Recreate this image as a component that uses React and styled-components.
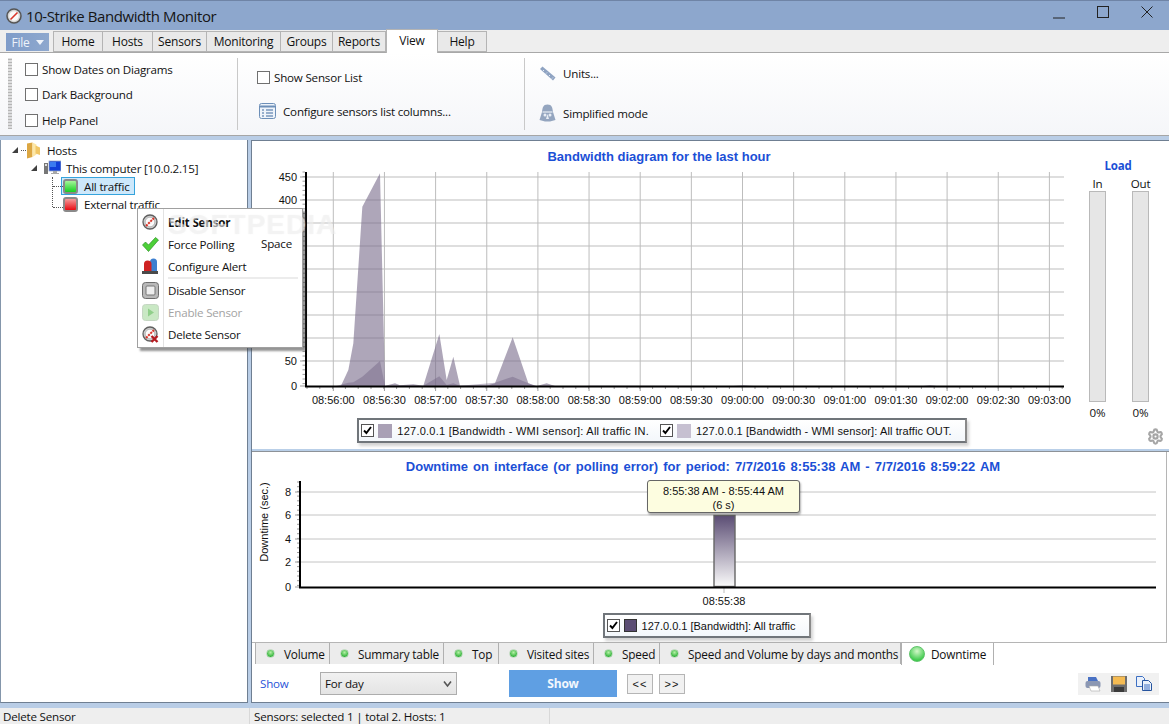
import React from 'react';
import styled, { createGlobalStyle } from 'styled-components';
import { Settings } from 'lucide-react';

const GlobalStyle = createGlobalStyle`
    html, body {
        margin: 0;
        padding: 0;
        background: #fff;
        overflow: hidden;
    }
    * {
        box-sizing: border-box;
    }
`;

const UI_FONT = '"Open Sans", "Noto Sans", sans-serif';
const CHART_FONT = '"Liberation Sans", Arial, sans-serif';

const Window = styled.div`
    width: 1169px;
    height: 724px;
    display: flex;
    flex-direction: column;
    position: relative;
    overflow: hidden;
    background: #b9cde6;
    font-family: ${UI_FONT};
    font-size: 11.6px;
    letter-spacing: -0.2px;
    color: #111;
`;

/* ---------- title bar ---------- */
const TitleBar = styled.div`
    height: 30px;
    flex: none;
    display: flex;
    align-items: center;
    padding-left: 6px;
    background: #8da7cd;
    border-top: 1px solid #6f84a6;
`;

const AppTitle = styled.div`
    font-size: 15px;
    letter-spacing: -0.4px;
    margin-left: 4px;
    color: #151515;
`;

const WindowButtons = styled.div`
    margin-left: auto;
    display: flex;
    align-items: flex-start;
    height: 100%;
`;

const WinBtn = styled.div`
    width: 44px;
    height: 24px;
    display: flex;
    justify-content: center;
    align-items: center;
`;

/* ---------- menu tabs ---------- */
const TabStrip = styled.div`
    height: 23px;
    flex: none;
    display: flex;
    align-items: flex-end;
    padding-left: 6px;
    background: #eeeeee;
    border-bottom: 1px solid #a8a8a8;
    position: relative;
`;

const FileButton = styled.div`
    width: 43px;
    height: 18px;
    margin: 3px 4px 1px 0;
    align-self: flex-start;
    display: flex;
    align-items: center;
    justify-content: center;
    gap: 6px;
    color: #eef3fa;
    font-size: 12px;
    background: linear-gradient(90deg, #7f9cc9, #8ea8ce);
`;

const MenuTab = styled.div`
    width: ${(props) => props.$w}px;
    height: ${(props) => (props.$active ? 24 : 21)}px;
    margin-bottom: ${(props) => (props.$active ? -1 : 0)}px;
    display: flex;
    align-items: center;
    justify-content: center;
    padding-bottom: ${(props) => (props.$active ? 3 : 0)}px;
    background: ${(props) => (props.$active ? '#fff' : '#e9e9e9')};
    border: 1px solid #b4b4b4;
    border-bottom: ${(props) => (props.$active ? 'none' : '1px solid #b4b4b4')};
    border-left-width: ${(props) => (props.$first || props.$active ? 1 : 0)}px;
    font-size: 12px;
`;

/* ---------- ribbon ---------- */
const Ribbon = styled.div`
    height: 83px;
    flex: none;
    display: flex;
    padding: 5px 0 5px 8px;
    background: linear-gradient(180deg, #ffffff, #f5f6f9);
    border-bottom: 1px solid #a6a6a6;
`;

const Grip = styled.div`
    width: 4px;
    height: 71px;
    background-image: radial-gradient(circle, #b5b5b5 1px, transparent 1.2px);
    background-size: 2px 3px;
`;

const RibbonGroup = styled.div`
    width: ${(props) => props.$w}px;
    display: flex;
    flex-direction: column;
    justify-content: ${(props) => props.$justify || 'space-between'};
    gap: ${(props) => props.$gap || 0}px;
    padding: ${(props) => props.$pad};
    border-right: ${(props) => (props.$last ? 'none' : '1px solid #c9c9c9')};
`;

const CheckRow = styled.label`
    display: flex;
    align-items: center;
    gap: 4px;
    height: 16px;
`;

const CheckBox = styled.span`
    width: 13px;
    height: 13px;
    flex: none;
    background: #fff;
    border: 1px solid #707070;
    display: inline-flex;
    align-items: center;
    justify-content: center;
`;

const RibbonAction = styled.div`
    display: flex;
    align-items: center;
    gap: ${(props) => props.$gap}px;
    height: 18px;
    margin-left: ${(props) => props.$left || 0}px;
`;

/* ---------- main body ---------- */
const Body = styled.div`
    flex: 1;
    display: flex;
    min-height: 0;
    padding-top: 4px;
`;

const TreePane = styled.div`
    width: 248px;
    flex: none;
    background: #fff;
    border: 1px solid #6f7f92;
    border-top: none;
    border-left-color: #8496ab;
    padding-top: 1px;
`;

const TreeRow = styled.div`
    height: 18px;
    display: flex;
    align-items: center;
    padding-left: ${(props) => props.$indent}px;
    position: relative;
`;

const Expander = styled.span`
    width: 0;
    height: 0;
    border-left: 6px solid transparent;
    border-bottom: 6px solid #404040;
    margin-right: ${(props) => props.$gap}px;
    flex: none;
`;

const DotLink = styled.span`
    position: absolute;
    left: ${(props) => props.$x}px;
    top: ${(props) => props.$y}px;
    width: ${(props) => props.$w || 0}px;
    height: ${(props) => props.$h || 0}px;
    border-top: ${(props) => (props.$w ? '1px dotted #555' : 'none')};
    border-left: ${(props) => (props.$h ? '1px dotted #555' : 'none')};
`;

const TreeLabel = styled.span`
    margin-left: ${(props) => props.$gap}px;
    white-space: nowrap;
`;

const SensorBox = styled.div`
    height: 18px;
    width: ${(props) => (props.$selected ? '74px' : 'auto')};
    display: flex;
    align-items: center;
    padding-left: 2px;
    background: ${(props) => (props.$selected ? '#cde8fb' : 'transparent')};
    outline: ${(props) => (props.$selected ? '1px solid #35a3dc' : 'none')};
    outline-offset: -1px;
`;

const SensorLed = styled.span`
    width: 15px;
    height: 15px;
    flex: none;
    border-radius: 3px;
    border: 2px solid #8a8a8a;
    background: ${(props) =>
        props.$color === 'green'
            ? 'linear-gradient(180deg, #a5f59b, #15d020)'
            : 'linear-gradient(180deg, #f59a9a, #e80b12)'};
`;

const Main = styled.div`
    flex: 1;
    display: flex;
    flex-direction: column;
    min-width: 0;
    margin-left: 3px;
    background: #fff;
    border-left: 1px solid #6f7f92;
    border-top: 1px solid #6f7f92;
    border-bottom: 1px solid #6f7f92;
`;

const TopChart = styled.section`
    height: 308px;
    flex: none;
    display: flex;
    background: #fff;
`;

const ChartColumn = styled.div`
    width: 814px;
    flex: none;
    display: flex;
    flex-direction: column;
    align-items: center;
`;

const ChartTitle = styled.h2`
    margin: 0;
    font-family: ${CHART_FONT};
    font-size: 13px;
    font-weight: 700;
    letter-spacing: 0;
    color: #1b4fd6;
    white-space: nowrap;
    word-spacing: ${(props) => props.$spacing || 0}px;
    height: ${(props) => props.$h}px;
    line-height: ${(props) => props.$h}px;
    padding-right: ${(props) => props.$shift || 0}px;
`;

const Plot = styled.svg`
    display: block;
    flex: none;
    overflow: visible;
    font-family: ${CHART_FONT};
    font-size: 11px;
    letter-spacing: 0;
`;

const Legend = styled.div`
    height: 25px;
    flex: none;
    margin-right: ${(props) => props.$shift || 0}px;
    display: flex;
    align-items: center;
    gap: 11px;
    padding: 0 ${(props) => props.$endPad}px 0 2px;
    font-family: ${CHART_FONT};
    font-size: 11px;
    background: linear-gradient(180deg, #fff, #f3f7fb);
    border: 2px solid #70757a;
    border-right-color: #8a8a8a;
    box-shadow: 2px 3px 3px rgba(0, 0, 0, 0.18);
`;

const LegendItem = styled.span`
    display: flex;
    align-items: center;
    white-space: nowrap;
    letter-spacing: ${(props) => props.$tracking}px;
`;

const LegendCheck = styled(CheckBox)`
    margin-right: 4px;
    border-color: #555;
`;

const Swatch = styled.span`
    width: ${(props) => props.$size || 14}px;
    height: ${(props) => props.$size || 14}px;
    margin-right: 5px;
    background: ${(props) => props.$color};
    border: ${(props) => (props.$outlined ? '1px solid #333' : 'none')};
`;

const LoadColumn = styled.div`
    flex: 1;
    position: relative;
    padding-top: 18px;
`;

const LoadTitle = styled.div`
    width: 60px;
    margin-left: 22px;
    text-align: center;
    font-weight: 700;
    font-size: 11.5px;
    color: #1b4fd6;
    line-height: 14px;
`;

const Meters = styled.div`
    display: flex;
    gap: 26px;
    margin-left: 23px;
    margin-top: 3px;
`;

const Meter = styled.div`
    width: 17px;
    display: flex;
    flex-direction: column;
    align-items: center;
    line-height: 15px;
    white-space: nowrap;
`;

const MeterBar = styled.div`
    width: 17px;
    height: 211px;
    margin: 0 0 3px;
    background: #e6e6e6;
    border: 1px solid #b9b9b9;
`;

const GearSpot = styled.div`
    position: absolute;
    left: 81px;
    top: 287px;
    color: #a6a6a6;
`;

const Divider = styled.div`
    height: 3px;
    flex: none;
    background: #b9cfe8;
    border-bottom: 1px solid #8d9298;
`;

const BottomChart = styled.section`
    height: 191px;
    flex: none;
    display: flex;
    flex-direction: column;
    align-items: center;
    margin-right: 2px;
    background: #fff;
    border-right: 1px solid #b5b5b5;
    border-bottom: 1px solid #b5b5b5;
`;

const ViewTabs = styled.div`
    height: 22px;
    flex: none;
    display: flex;
    padding-left: 3px;
    background: #fff;
`;

const ViewTab = styled.div`
    width: ${(props) => props.$w}px;
    height: ${(props) => (props.$active ? 22 : 21)}px;
    display: flex;
    align-items: center;
    padding-left: ${(props) => (props.$active ? 7 : 10)}px;
    gap: ${(props) => (props.$active ? 6 : 9)}px;
    background: ${(props) => (props.$active ? '#fff' : '#ececec')};
    border-left: ${(props) => (props.$active ? '1px solid #b0b0b0' : 'none')};
    border-right: 1px solid #b0b0b0;
    white-space: nowrap;
    font-size: 11.8px;
    &:first-child {
        border-left: 1px solid #b0b0b0;
    }
`;

const Led = styled.span`
    width: 9px;
    height: 9px;
    flex: none;
    border-radius: 50%;
    background: radial-gradient(circle at 50% 35%, #b4f0a5, #35b53d 70%);
    border: 1px solid #bcd9bc;
`;

const BigLed = styled(Led)`
    width: 16px;
    height: 16px;
    background: radial-gradient(circle at 50% 30%, #d2f8c8, #3fca4d 75%);
    border-color: #5fc46a;
`;

const Controls = styled.div`
    flex: 1;
    display: flex;
    align-items: center;
    padding: 0 10px 0 8px;
    background: #fff;
`;

const ShowLabel = styled.span`
    width: 60px;
    color: #2a55d8;
`;

const Combo = styled.div`
    width: 137px;
    height: 23px;
    display: flex;
    align-items: center;
    justify-content: space-between;
    padding: 0 4px;
    background: linear-gradient(180deg, #f1f1f1, #e4e4e4);
    border: 1px solid #adadad;
`;

const ShowButton = styled.div`
    width: 108px;
    height: 27px;
    margin-left: 52px;
    display: flex;
    align-items: center;
    justify-content: center;
    background: #5f9fe3;
    color: #f2f7fd;
    font-weight: 700;
    font-size: 12px;
`;

const StepButton = styled.div`
    width: 26px;
    height: 20px;
    margin-left: ${(props) => props.$left}px;
    display: flex;
    align-items: center;
    justify-content: center;
    background: #f1f1f1;
    border: 1px solid #b5b5b5;
    font-family: ${CHART_FONT};
    font-size: 11px;
    letter-spacing: 1px;
`;

const ExportGroup = styled.div`
    margin-left: auto;
    width: 81px;
    height: 22px;
    display: flex;
    align-items: center;
    justify-content: space-around;
    padding: 0 3px;
    background: #f1f1f1;
`;

const StatusBar = styled.div`
    height: 16px;
    flex: none;
    margin-top: 5px;
    display: flex;
    align-items: center;
    background: #eeeeee;
`;

const StatusCell = styled.div`
    width: ${(props) => props.$w}px;
    height: 100%;
    padding-left: ${(props) => props.$pad}px;
    border-right: 1px solid #d8d8d8;
    line-height: 17px;
    white-space: nowrap;
`;

/* ---------- context menu ---------- */
const ContextMenu = styled.div`
    position: absolute;
    left: 137px;
    top: 208px;
    width: 166px;
    height: 140px;
    background: #fff;
    border: 1px solid #a0a0a0;
    box-shadow: 3px 3px 2px rgba(60, 60, 60, 0.55);
    padding-top: 2px;
    z-index: 3;
    &::before {
        content: '';
        position: absolute;
        left: 25px;
        top: 0;
        bottom: 0;
        border-left: 1px solid #e2e2e2;
    }
`;

const MenuItem = styled.div`
    height: 22px;
    display: flex;
    align-items: center;
    position: relative;
    padding-left: 30px;
    font-weight: ${(props) => (props.$bold ? 700 : 400)};
    color: ${(props) => (props.$disabled ? '#a3a3a3' : '#111')};
    white-space: nowrap;
`;

const MenuIcon = styled.span`
    position: absolute;
    left: 4px;
    top: 3px;
    width: 17px;
    height: 17px;
    display: flex;
`;

const Shortcut = styled.span`
    position: absolute;
    left: 123px;
    top: 3px;
`;

const MenuSeparator = styled.div`
    height: 2px;
    margin-left: 30px;
    margin-right: 4px;
    background: #ececec;
`;

const Watermark = styled.div`
    position: absolute;
    left: 168px;
    top: 209px;
    z-index: 4;
    pointer-events: none;
    font-family: ${CHART_FONT};
    font-weight: 700;
    font-size: 28px;
    letter-spacing: 1px;
    color: rgba(246, 246, 246, 0.45);
    text-shadow: 0 0 1px rgba(215, 215, 215, 0.35);
`;

/* ---------- tooltips on the chart ---------- */
const Tooltip = styled.div`
    position: absolute;
    left: 647px;
    top: 480px;
    width: 153px;
    height: 33px;
    z-index: 2;
    text-align: center;
    font-family: ${CHART_FONT};
    font-size: 11px;
    letter-spacing: 0;
    line-height: 14px;
    padding-top: 3px;
    background: #fdfde0;
    border: 1px solid #666;
    border-radius: 3px;
    box-shadow: 1px 2px 2px rgba(0, 0, 0, 0.3);
`;

/* ---------- icons ---------- */
const Check = () => (
    <svg width="11" height="11" viewBox="0 0 11 11">
        <path d="M2 5.5 L4.4 8 L9 2" fill="none" stroke="#000" strokeWidth="1.9" />
    </svg>
);

const Gauge = ({ cross }) => (
    <svg width="17" height="17" viewBox="0 0 17 17">
        <circle cx="8" cy="8" r="7" fill="#cfcfcf" stroke="#5f5f5f" strokeWidth="1.3" />
        <circle cx="8" cy="8" r="4.8" fill="#fbfbfb" stroke="#9a9a9a" strokeWidth="0.6" />
        <path d="M4 12 L12 4" stroke="#d9362b" strokeWidth="2" strokeDasharray="2.2 0.9" />
        {cross && <path d="M9.5 10 L15.5 16 M15.5 10 L9.5 16" stroke="#b51c22" strokeWidth="2.4" />}
    </svg>
);

const Folder = () => (
    <svg width="13" height="17" viewBox="0 0 13 17">
        <path d="M0 1.5 L5.5 0.5 L5.5 15 L0 16.5 Z" fill="#dca743" />
        <path d="M5.5 0.5 L9.5 2.5 L9.5 12.5 L5.5 15 Z" fill="#fde7a6" />
        <path d="M8.5 3.5 L13 5.5 L13 13 L8.5 11.5 Z" fill="#f1c766" />
    </svg>
);

const Computer = () => (
    <svg width="17" height="16" viewBox="0 0 17 16">
        <rect x="0" y="3" width="4" height="11" fill="#777" />
        <rect x="1" y="4" width="2" height="2" fill="#ddd" />
        <rect x="5" y="1" width="12" height="10" fill="#1140d8" stroke="#9aa8c4" strokeWidth="0.8" />
        <rect x="6" y="2" width="6" height="5" fill="#3a7bf0" />
        <path d="M9 11 h4 v2 h2 v1 h-8 v-1 h2 Z" fill="#a9a9a9" />
    </svg>
);

const ColumnsIcon = () => (
    <svg width="17" height="16" viewBox="0 0 17 16">
        <rect x="0.5" y="0.5" width="16" height="15" rx="2" fill="#eef3fa" stroke="#6d8fb8" />
        <path d="M1 3.5 H16" stroke="#6d8fb8" strokeWidth="2" />
        <path d="M3 7 h2 M7 7 h7 M3 10 h2 M7 10 h7 M3 13 h2 M7 13 h7" stroke="#3f6a9e" strokeWidth="1.2" />
    </svg>
);

const RulerIcon = () => (
    <svg width="17" height="15" viewBox="0 0 17 15">
        <path d="M1 3 L3.5 0.5 L16.5 11.5 L14 14.5 Z" fill="#8fa3c2" />
        <path d="M5 4 L4 5 M8 6.5 L7 7.5 M11 9 L10 10 M14 11.5 L13 12.5" stroke="#e5ebf4" strokeWidth="1" />
    </svg>
);

const ModeIcon = () => (
    <svg width="17" height="18" viewBox="0 0 17 18">
        <path d="M8.5 0.5 C4 0.5 3.5 4 3 8 L0.5 16 L6 17.5 H11 L16.5 16 L14 8 C13.5 4 13 0.5 8.5 0.5 Z" fill="#94a5bf" />
        <path d="M3.5 8 H13.5" stroke="#e8edf4" strokeWidth="1.2" />
        <circle cx="6" cy="11" r="1.5" fill="#e8edf4" />
        <circle cx="11" cy="11" r="1.5" fill="#e8edf4" />
        <path d="M8.5 10 L7 15 H10 Z" fill="#e8edf4" />
    </svg>
);

const CheckMark = () => (
    <svg width="17" height="17" viewBox="0 0 17 17">
        <path d="M0.5 9 L3.5 6 L6.5 9 L13.5 1.5 L16.5 4 L6.5 15.5 Z" fill="#4cd038" stroke="#2f8f28" strokeWidth="0.7" />
    </svg>
);

const Siren = () => (
    <svg width="17" height="17" viewBox="0 0 17 17">
        <path d="M8 4 Q8 0.5 11.5 0.5 Q15 0.5 15 4 V13 H8 Z" fill="#3c7fd0" />
        <path d="M2 6 Q2 2.5 5.5 2.5 Q9.5 2.5 9.5 6 V13 H2 Z" fill="#cf2222" />
        <path d="M0 13 H16 V16 H0 Z" fill="#4a4a4a" />
    </svg>
);

const DisableIcon = ({ faded }) => (
    <svg width="17" height="17" viewBox="0 0 17 17">
        {faded ? (
            <>
                <rect x="0.5" y="0.5" width="16" height="16" rx="3" fill="#c9e8c4" stroke="#c5d6c3" />
                <path d="M6 4.5 L12 8.5 L6 12.5 Z" fill="#90cf8a" />
            </>
        ) : (
            <>
                <rect x="0.5" y="0.5" width="16" height="16" rx="3" fill="#b9b9b9" stroke="#6d6d6d" />
                <rect x="4" y="4" width="9" height="9" rx="1" fill="#eeeeee" stroke="#777" />
            </>
        )}
    </svg>
);

const PrintIcon = () => (
    <svg width="17" height="16" viewBox="0 0 17 16">
        <path d="M3 1 h8 l2 4 h-10 Z" fill="#4a72c4" />
        <rect x="0.5" y="5" width="15" height="7" rx="2" fill="#8b97b3" />
        <path d="M4 10 h9 l2 5 h-9 Z" fill="#fff" stroke="#aaa" strokeWidth="0.6" />
    </svg>
);

const SaveIcon = () => (
    <svg width="16" height="16" viewBox="0 0 16 16">
        <rect width="16" height="16" fill="#6e6e6e" />
        <rect x="2" y="0.5" width="12" height="8" fill="#f5bb52" />
        <rect x="3" y="11" width="10" height="5" fill="#3a3a3a" />
    </svg>
);

const CopyIcon = () => (
    <svg width="16" height="15" viewBox="0 0 16 15">
        <path d="M0.5 0.5 h6 l2 2 v8 h-8 Z" fill="#eaf1fb" stroke="#3d6fc2" />
        <path d="M6.5 4.5 h6 l3 3 v7 h-9 Z" fill="#eaf1fb" stroke="#27549e" />
        <path d="M8 9 h6 M8 11 h6 M8 13 h6" stroke="#3d6fc2" />
    </svg>
);

/* ---------- chart data ---------- */
const zoomPts = (list) => list.map(([x, y]) => `${250 + x / 3},${140 + y / 3}`).join(' ');

const OUT_SHAPE = [
    [250, 740], [273, 737], [295, 690], [310, 610], [337, 200], [390, 100], [405, 738], [412, 736],
    [435, 730], [450, 736], [490, 733], [520, 737], [568, 582], [590, 720], [610, 650], [630, 737],
    [710, 737], [735, 730], [788, 592], [835, 730], [860, 738], [890, 730], [915, 738], [1010, 738],
    [1020, 737], [1450, 738], [1480, 736], [1510, 738], [2020, 738], [2040, 736], [2060, 738], [2442, 740],
];

const IN_SHAPE = [
    [250, 740], [295, 728], [310, 727], [337, 710], [390, 663], [405, 738], [520, 737], [568, 709],
    [590, 735], [610, 730], [630, 737], [735, 728], [788, 710], [835, 730], [860, 740], [2442, 740],
];

const Y_LINES = [
    { y: 177, label: '450' }, { y: 200, label: '400' }, { y: 223, label: '350' }, { y: 246, label: '300' },
    { y: 269, label: '250' }, { y: 292, label: '200' }, { y: 315, label: '150' }, { y: 338, label: '100' },
    { y: 361, label: '50' }, { y: 386, label: '0' },
];

const TIMES = [
    '08:56:00', '08:56:30', '08:57:00', '08:57:30', '08:58:00', '08:58:30', '08:59:00', '08:59:30',
    '09:00:00', '09:00:30', '09:01:00', '09:01:30', '09:02:00', '09:02:30', '09:03:00',
];

const DOWN_LINES = [
    { y: 492, label: '8' }, { y: 515, label: '6' }, { y: 539, label: '4' }, { y: 562, label: '2' },
];

const MENU_TABS = [
    ['Home', 50, true], ['Hosts', 50], ['Sensors', 54], ['Monitoring', 74], ['Groups', 52], ['Reports', 53],
];

const VIEW_TABS = [
    ['Volume', 75], ['Summary table', 114], ['Top', 55], ['Visited sites', 95], ['Speed', 66],
    ['Speed and Volume by days and months', 241],
];

const BandwidthPlot = () => {
    const minor = [];
    for (let y = 172; y < 386; y += 4.6) minor.push(y);
    const minorX = [];
    for (let x = 307; x < 1064; x += 12.8) minorX.push(x);
    return (
        <Plot width="814" height="246" viewBox="252 172 814 246">
            {Y_LINES.slice(0, -1).map((l) => (
                <line key={l.y} x1="306" x2="1064" y1={l.y} y2={l.y} stroke="#bdbdbd" strokeWidth="1" />
            ))}
            {TIMES.map((t, i) => (
                <line key={t} x1={333.3 + i * 51.15} x2={333.3 + i * 51.15} y1="172" y2="386" stroke="#bdbdbd" strokeWidth="1" />
            ))}
            <polygon points={zoomPts(OUT_SHAPE)} fill="#786a8a" fillOpacity="0.6" />
            <polygon points={zoomPts(IN_SHAPE)} fill="#6d5f80" fillOpacity="0.42" />
            {minor.map((y) => (
                <line key={y} x1="302.5" x2="305" y1={y} y2={y} stroke="#9c9c9c" />
            ))}
            {minorX.map((x) => (
                <line key={x} x1={x} x2={x} y1="387" y2="389" stroke="#9c9c9c" />
            ))}
            {Y_LINES.map((l) => (
                <g key={l.label}>
                    <line x1="300" x2="305" y1={l.y} y2={l.y} stroke="#9c9c9c" />
                    <text x="297" y={l.y + 4} textAnchor="end" fill="#111">{l.label}</text>
                </g>
            ))}
            {TIMES.map((t, i) => (
                <g key={t}>
                    <line x1={333.3 + i * 51.15} x2={333.3 + i * 51.15} y1="387" y2="391" stroke="#9c9c9c" />
                    <text x={333.3 + i * 51.15} y="404" textAnchor="middle" fill="#111">{t}</text>
                </g>
            ))}
            <path d="M306 172 V386.5 H1064" fill="none" stroke="#000" strokeWidth="2" />
        </Plot>
    );
};

const DowntimePlot = () => {
    const minor = [];
    for (let y = 482; y < 587; y += 4.7) minor.push(y);
    return (
        <Plot width="912" height="131" viewBox="252 482 912 131">
            <defs>
                <linearGradient id="downBar" x1="0" x2="0" y1="0" y2="1">
                    <stop offset="0" stopColor="#5b4d74" />
                    <stop offset="1" stopColor="#fafafa" />
                </linearGradient>
            </defs>
            {DOWN_LINES.map((l) => (
                <line key={l.y} x1="299" x2="1155" y1={l.y} y2={l.y} stroke="#c4c4c4" />
            ))}
            <rect x="713" y="515.5" width="21" height="71" fill="url(#downBar)" stroke="#666" strokeWidth="1.4" />
            {minor.map((y) => (
                <line key={y} x1="296" x2="298" y1={y} y2={y} stroke="#9c9c9c" />
            ))}
            {[...DOWN_LINES, { y: 587, label: '0' }].map((l) => (
                <g key={l.label}>
                    <line x1="294" x2="298" y1={l.y} y2={l.y} stroke="#9c9c9c" />
                    <text x="290" y={l.y + 4} textAnchor="end" fill="#111">{l.label}</text>
                </g>
            ))}
            <text transform="translate(267 522) rotate(-90)" textAnchor="middle" fill="#111">Downtime (sec.)</text>
            <line x1="723" x2="723" y1="588" y2="593" stroke="#bbb" />
            <text x="723" y="605" textAnchor="middle" fill="#111">08:55:38</text>
            <path d="M299 481 V587.5 H1155" fill="none" stroke="#000" strokeWidth="2" />
        </Plot>
    );
};

const App = () => {
    return (
        <Window>
            <GlobalStyle />
            <TitleBar>
                <svg width="16" height="16" viewBox="0 0 16 16">
                    <circle cx="8" cy="8" r="7" fill="#d5d5d5" stroke="#555" strokeWidth="1.5" />
                    <circle cx="8" cy="8" r="4.8" fill="#fafafa" />
                    <path d="M4.5 11.5 L11.5 4.5" stroke="#d9362b" strokeWidth="1.6" />
                </svg>
                <AppTitle>10-Strike Bandwidth Monitor</AppTitle>
                <WindowButtons>
                    <WinBtn>
                        <svg width="14" height="14" viewBox="0 0 14 14">
                            <path d="M1 12 H13" stroke="#222" strokeWidth="1" />
                        </svg>
                    </WinBtn>
                    <WinBtn>
                        <svg width="14" height="14" viewBox="0 0 14 14">
                            <rect x="1.5" y="0.5" width="11" height="11" fill="none" stroke="#222" />
                        </svg>
                    </WinBtn>
                    <WinBtn>
                        <svg width="14" height="14" viewBox="0 0 14 14">
                            <path d="M1.5 0.5 L12.5 11.5 M12.5 0.5 L1.5 11.5" stroke="#222" />
                        </svg>
                    </WinBtn>
                </WindowButtons>
            </TitleBar>

            <TabStrip>
                <FileButton>
                    File
                    <svg width="8" height="5" viewBox="0 0 8 5"><path d="M0 0 H8 L4 5 Z" fill="#eef3fa" /></svg>
                </FileButton>
                {MENU_TABS.map(([label, w, first]) => (
                    <MenuTab key={label} $w={w} $first={first}>{label}</MenuTab>
                ))}
                <MenuTab $w={52} $active>View</MenuTab>
                <MenuTab $w={49}>Help</MenuTab>
            </TabStrip>

            <Ribbon>
                <Grip />
                <RibbonGroup $w={226} $pad="3px 0 2px 13px">
                    <CheckRow><CheckBox />Show Dates on Diagrams</CheckRow>
                    <CheckRow><CheckBox />Dark Background</CheckRow>
                    <CheckRow><CheckBox />Help Panel</CheckRow>
                </RibbonGroup>
                <RibbonGroup $w={287} $justify="flex-start" $gap={17} $pad="11px 0 0 19px">
                    <CheckRow><CheckBox />Show Sensor List</CheckRow>
                    <RibbonAction $gap={7} $left={2}><ColumnsIcon />Configure sensors list columns...</RibbonAction>
                </RibbonGroup>
                <RibbonGroup $w={200} $last $justify="flex-start" $gap={22} $pad="6px 0 0 14px">
                    <RibbonAction $gap={7}><RulerIcon />Units...</RibbonAction>
                    <RibbonAction $gap={7}><ModeIcon />Simplified mode</RibbonAction>
                </RibbonGroup>
            </Ribbon>

            <Body>
                <TreePane>
                    <TreeRow $indent={11}>
                        <Expander $gap={9} />
                        <DotLink $x={20} $y={9} $w={5} />
                        <Folder />
                        <TreeLabel $gap={7}>Hosts</TreeLabel>
                    </TreeRow>
                    <TreeRow $indent={30}>
                        <Expander $gap={7} />
                        <Computer />
                        <TreeLabel $gap={5}>This computer [10.0.2.15]</TreeLabel>
                    </TreeRow>
                    <TreeRow $indent={60}>
                        <DotLink $x={51} $y={0} $h={30} />
                        <DotLink $x={52} $y={9} $w={10} />
                        <SensorBox $selected>
                            <SensorLed $color="green" />
                            <TreeLabel $gap={6}>All traffic</TreeLabel>
                        </SensorBox>
                    </TreeRow>
                    <TreeRow $indent={60}>
                        <DotLink $x={52} $y={12} $w={10} />
                        <SensorBox>
                            <SensorLed $color="red" />
                            <TreeLabel $gap={6}>External traffic</TreeLabel>
                        </SensorBox>
                    </TreeRow>
                </TreePane>

                <Main>
                    <TopChart>
                        <ChartColumn>
                            <ChartTitle $h={31}>Bandwidth diagram for the last hour</ChartTitle>
                            <BandwidthPlot />
                            <Legend $shift={-6} $endPad={13}>
                                <LegendItem $tracking={0.24}>
                                    <LegendCheck><Check /></LegendCheck>
                                    <Swatch $color="#a9a0b5" />
                                    127.0.0.1 [Bandwidth - WMI sensor]: All traffic IN.
                                </LegendItem>
                                <LegendItem $tracking={0.1}>
                                    <LegendCheck><Check /></LegendCheck>
                                    <Swatch $color="#c6c0d1" />
                                    127.0.0.1 [Bandwidth - WMI sensor]: All traffic OUT.
                                </LegendItem>
                            </Legend>
                        </ChartColumn>
                        <LoadColumn>
                            <LoadTitle>Load</LoadTitle>
                            <Meters>
                                <Meter>In<MeterBar />0%</Meter>
                                <Meter>Out<MeterBar />0%</Meter>
                            </Meters>
                            <GearSpot><Settings size={17} strokeWidth={3} /></GearSpot>
                        </LoadColumn>
                    </TopChart>
                    <Divider />
                    <BottomChart>
                        <ChartTitle $h={30} $spacing={1.5} $shift={12}>
                            Downtime on interface (or polling error) for period: 7/7/2016 8:55:38 AM - 7/7/2016 8:59:22 AM
                        </ChartTitle>
                        <DowntimePlot />
                        <Legend $shift={4} $endPad={14}>
                            <LegendItem $tracking={0}>
                                <LegendCheck><Check /></LegendCheck>
                                <Swatch $size={13} $color="#5b4d74" $outlined />
                                127.0.0.1 [Bandwidth]: All traffic
                            </LegendItem>
                        </Legend>
                    </BottomChart>
                    <ViewTabs>
                        {VIEW_TABS.map(([label, w]) => (
                            <ViewTab key={label} $w={w}><Led />{label}</ViewTab>
                        ))}
                        <ViewTab $w={93} $active><BigLed />Downtime</ViewTab>
                    </ViewTabs>
                    <Controls>
                        <ShowLabel>Show</ShowLabel>
                        <Combo>
                            For day
                            <svg width="9" height="8" viewBox="0 0 9 8">
                                <path d="M1 1.5 L4.5 6 L8 1.5" fill="none" stroke="#555" strokeWidth="1.6" />
                            </svg>
                        </Combo>
                        <ShowButton>Show</ShowButton>
                        <StepButton $left={10}>&lt;&lt;</StepButton>
                        <StepButton $left={6}>&gt;&gt;</StepButton>
                        <ExportGroup>
                            <PrintIcon />
                            <SaveIcon />
                            <CopyIcon />
                        </ExportGroup>
                    </Controls>
                </Main>
            </Body>

            <StatusBar>
                <StatusCell $w={250} $pad={3}>Delete Sensor</StatusCell>
                <StatusCell $w={300} $pad={4}>Sensors: selected 1 | total 2. Hosts: 1</StatusCell>
            </StatusBar>

            <ContextMenu>
                <MenuItem $bold><MenuIcon><Gauge /></MenuIcon>Edit Sensor</MenuItem>
                <MenuItem><MenuIcon><CheckMark /></MenuIcon>Force Polling<Shortcut>Space</Shortcut></MenuItem>
                <MenuItem><MenuIcon><Siren /></MenuIcon>Configure Alert</MenuItem>
                <MenuSeparator />
                <MenuItem><MenuIcon><DisableIcon /></MenuIcon>Disable Sensor</MenuItem>
                <MenuItem $disabled><MenuIcon><DisableIcon faded /></MenuIcon>Enable Sensor</MenuItem>
                <MenuItem><MenuIcon><Gauge cross /></MenuIcon>Delete Sensor</MenuItem>
            </ContextMenu>
            <Watermark>SOFTPEDIA</Watermark>
            <Tooltip>8:55:38 AM - 8:55:44 AM<br />(6 s)</Tooltip>
        </Window>
    );
};

export default App;
